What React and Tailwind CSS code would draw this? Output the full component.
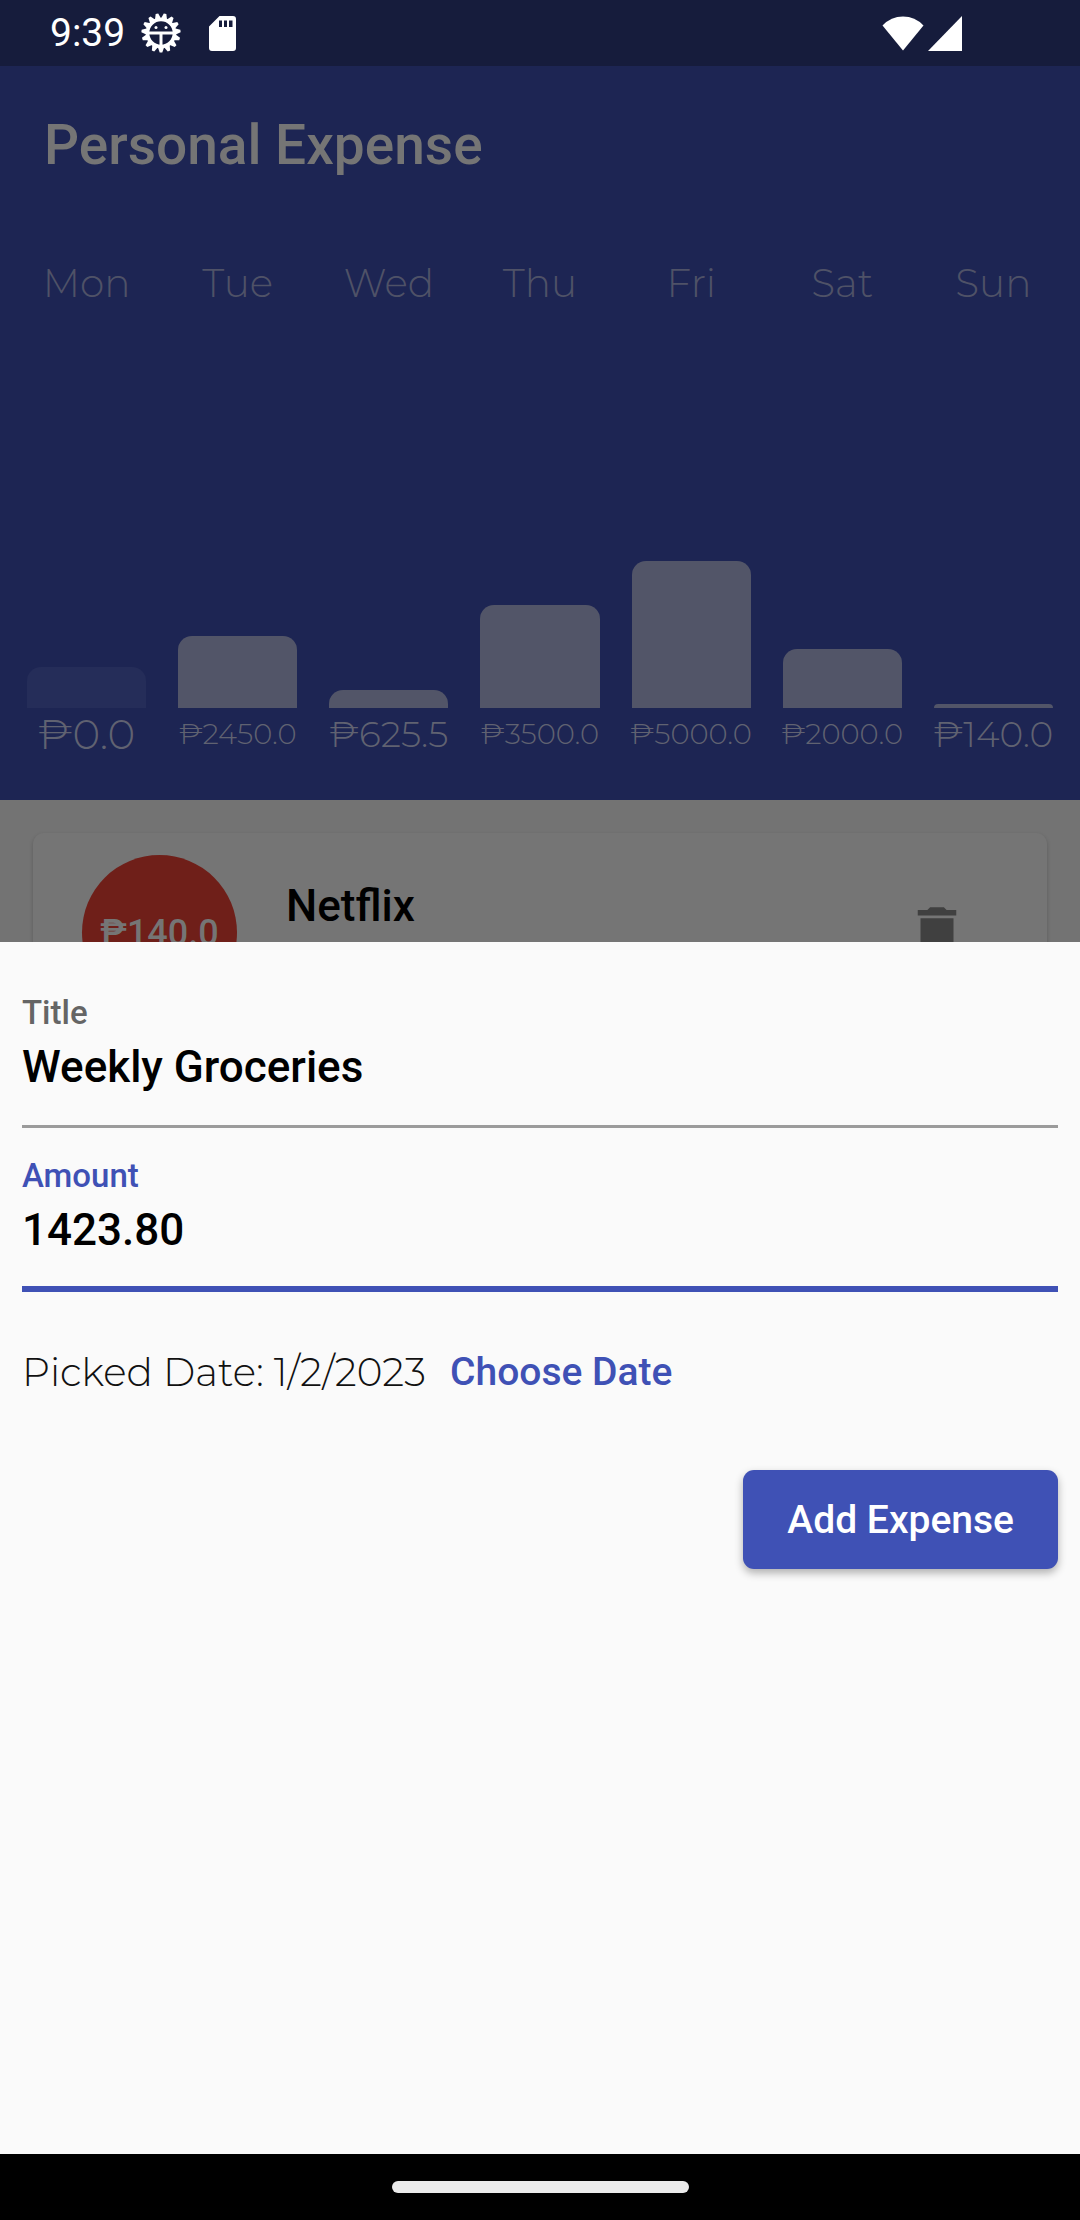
const days = [
  { day: 'Mon', amount: 0, label: '₱0.0', size: 'text-[42px]' },
  { day: 'Tue', amount: 2450, label: '₱2450.0', size: 'text-[29px]' },
  { day: 'Wed', amount: 625.5, label: '₱625.5', size: 'text-[36px]' },
  { day: 'Thu', amount: 3500, label: '₱3500.0', size: 'text-[29px]' },
  { day: 'Fri', amount: 5000, label: '₱5000.0', size: 'text-[29px]' },
  { day: 'Sat', amount: 2000, label: '₱2000.0', size: 'text-[29px]' },
  { day: 'Sun', amount: 140, label: '₱140.0', size: 'text-[36px]' },
]
const total = days.reduce((sum, d) => sum + d.amount, 0)

const teeth = Array.from({ length: 15 }, (_, i) => 180 + i * 24)

function DebugIcon() {
  return (
    <svg viewBox="-20 -20 40 40" className="size-10" fill="none" stroke="#fff" aria-hidden="true">
      {teeth.map((a) => (
        <path key={a} d="M-3.200 -14L-1.300 -19.600H1.300L3.200 -14Z" fill="#fff" stroke="none" transform={`rotate(${a})`} />
      ))}
      <circle r="13.500" strokeWidth="3.600" />
      <path d="M-13 0H13" strokeWidth="3" />
      <path d="M0 0V13" strokeWidth="3" />
      <circle cx="-5" cy="-5.500" r="1.500" fill="#fff" stroke="none" />
      <circle cx="5" cy="-5.500" r="1.500" fill="#fff" stroke="none" />
    </svg>
  )
}

function StatusBar() {
  return (
    <div className="flex h-[66px] items-center bg-[#161c3c] pl-[50px] pr-[118px] text-white">
      <span className="text-[39px] leading-10">9:39</span>
      <div className="ml-4 flex items-center gap-7">
        <DebugIcon />
        <svg viewBox="0 0 27 35" className="h-[35px] w-[27px]" fill="#fff" fillRule="evenodd" aria-hidden="true">
          <path d="M10.500 0H24Q27 0 27 3V32Q27 35 24 35H3Q0 35 0 32V10.500ZM10 4.500V11H13V4.500ZM15 4.500V11H18V4.500ZM20 4.500V11H23.500V4.500Z" />
        </svg>
      </div>
      <div className="ml-auto flex items-center gap-1">
        <svg viewBox="0 0 42 35" className="h-[35px] w-[42px]" fill="#fff" aria-hidden="true">
          <path d="M0.500 9.500Q9 0.500 21 0.500T41.500 9.500L21 34.500Z" />
        </svg>
        <svg viewBox="0 0 34 35" className="h-[35px] w-[34px]" fill="#fff" aria-hidden="true">
          <path d="M34 0V35H0Z" />
        </svg>
      </div>
    </div>
  )
}

function Chart() {
  return (
    <div className="grid grid-cols-7 px-[11px] pt-10 pb-10">
      {days.map((d) => (
        <div key={d.day} className="flex flex-col items-center px-4 font-['Montserrat','Inter',sans-serif] font-light">
          <div className="text-[39px] leading-[46px] text-[#4f5267]">{d.day}</div>
          <div className="flex h-[402px] w-full items-end">
            {d.amount === 0 ? (
              <div className="h-[41px] w-full rounded-t-[14px] bg-[#252d59]" />
            ) : (
              <div
                className="w-full rounded-t-[14px] bg-[#525568]"
                style={{ height: `${(d.amount / total) * 100}%` }}
              />
            )}
          </div>
          <div className={`flex h-[52px] items-center whitespace-nowrap text-[#606271] ${d.size}`}>{d.label}</div>
        </div>
      ))}
    </div>
  )
}

function ExpenseCard() {
  return (
    <article className="mx-[33px] mt-[33px] flex h-[198px] items-start rounded-[11px] bg-[#757575] pl-[49px] pr-[77px] pt-[22px] shadow-[0_2px_4px_rgba(0,0,0,0.2)]">
      <div className="flex size-[155px] items-center justify-center rounded-full bg-[#6f1f19] text-[36px] font-medium text-[#757575]">
        ₱140.0
      </div>
      <h2 className="ml-[49px] mt-[23px] text-[44px] font-medium leading-[56px] text-black">Netflix</h2>
      <button type="button" aria-label="Delete Netflix" className="ml-auto mt-[44px]">
        <svg viewBox="0 0 24 24" className="size-[66px]" fill="#404040" aria-hidden="true">
          <path d="M6 19c0 1.100.9 2 2 2h8c1.100 0 2-.9 2-2V7H6v12zM19 4h-3.500l-1-1h-5l-1 1H5v2h14V4z" />
        </svg>
      </button>
    </article>
  )
}

function ExpenseForm() {
  return (
    <form className="flex grow flex-col bg-[#fafafa] px-[22px] pt-[51px]" onSubmit={(e) => e.preventDefault()}>
      <label htmlFor="title" className="text-[33px] font-medium leading-10 text-[#656565]">Title</label>
      <input
        id="title"
        defaultValue="Weekly Groceries"
        className="mt-1.5 h-[89px] w-full border-b-[3px] border-[#9b9b9b] bg-transparent pb-[30px] text-[44px] font-medium leading-[56px] text-black outline-none"
      />
      <label htmlFor="amount" className="mt-7 text-[33px] font-medium leading-10 text-[#3f51b5]">Amount</label>
      <input
        id="amount"
        inputMode="decimal"
        defaultValue="1423.80"
        className="mt-1.5 h-[90px] w-full border-b-[6px] border-[#3f51b5] bg-transparent pb-7 text-[44px] font-medium leading-[56px] text-black outline-none"
      />
      <div className="mt-9 flex h-[88px] items-center gap-6">
        <span className="font-['Montserrat','Inter',sans-serif] text-[39px] font-light text-[#111]">Picked Date: 1/2/2023</span>
        <button type="button" className="text-[39px] font-medium text-[#3f51b5]">Choose Date</button>
      </div>
      <button
        type="submit"
        className="mt-[54px] h-[99px] self-end rounded-[11px] bg-[#3f51b5] px-11 pt-0.5 text-[39px] font-medium text-white shadow-[0_4px_8px_rgba(0,0,0,0.3)]"
      >
        Add Expense
      </button>
    </form>
  )
}

export default function App() {
  return (
    <div className="flex min-h-screen flex-col bg-[#737373] font-['Roboto',sans-serif]">
      <StatusBar />
      <main className="h-[876px] overflow-hidden">
        <header className="bg-[#1d2553]">
          <h1 className="flex h-[154px] items-center px-11 pt-1 text-[55px] font-medium text-[#757575]">Personal Expense</h1>
          <Chart />
        </header>
        <ExpenseCard />
      </main>
      <ExpenseForm />
      <div className="flex h-[66px] items-center justify-center bg-black">
        <div className="h-3 w-[297px] rounded-full bg-[#ebebeb]" />
      </div>
    </div>
  )
}
